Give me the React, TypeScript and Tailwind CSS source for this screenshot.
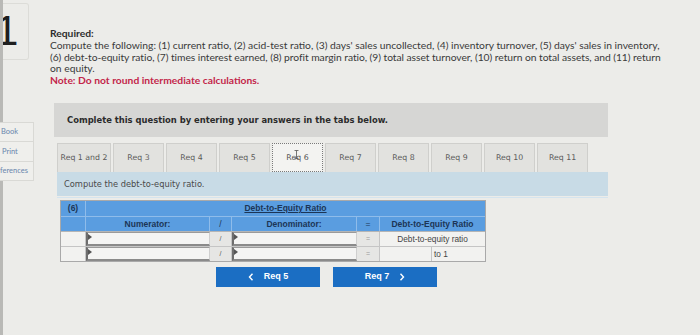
import React from "react";

const tabs = ["Req 1 and 2", "Req 3", "Req 4", "Req 5", "Req 6", "Req 7", "Req 8", "Req 9", "Req 10", "Req 11"];

function Chevron({ dir }: { dir: "left" | "right" }) {
  return (
    <svg width="6" height="8" viewBox="0 0 6 8" fill="none" stroke="white" strokeWidth="1.4">
      {dir === "left" ? <path d="M4.5 0.8 L1.5 4 L4.5 7.2" /> : <path d="M1.5 0.8 L4.5 4 L1.5 7.2" />}
    </svg>
  );
}

function InputCell({ w }: { w: string }) {
  return (
    <div className={`${w} h-full relative bg-[#f4f4f3] border-l-2 border-b-2 border-t border-r border-l-[#6d6d6d] border-b-[#8a8a8a] border-t-[#9a9a9a] border-r-[#cfcfcf]`}>
      <div className="absolute left-0 top-[1px] w-0 h-0 border-t-[3px] border-b-[3px] border-l-[4px] border-t-transparent border-b-transparent border-l-[#555]" />
    </div>
  );
}

export default function App() {
  return (
    <div className="w-[700px] h-[335px] overflow-hidden bg-[#ecece9] flex" style={{ fontFamily: "Lato, 'Liberation Sans', sans-serif" }}>
      {/* left column */}
      <div className="w-[34px] shrink-0 flex flex-col border-l-[3px] border-l-[#b9b9b6]">
        <div className="mt-[3px] w-[26px] h-[57px] border border-l-0 border-[#dcdcd8] rounded-r-[3px] overflow-hidden">
          <div className="ml-[-8px] mt-[2px] text-[42px] leading-[50px] text-[#1e1e1e] font-['Liberation_Sans']">1</div>
        </div>
        <div className="mt-[62px] flex flex-col w-[34px] -ml-[3px] text-[7.5px] text-[#6a86ac]">
          <div className="h-[20px] border border-l-0 border-[#d9d9d5] bg-[#efefec] flex items-center pl-[1px]">Book</div>
          <div className="h-[20px] border border-l-0 border-t-0 border-[#d9d9d5] bg-[#efefec] flex items-center pl-[2px]">Print</div>
          <div className="h-[19px] border border-l-0 border-t-0 border-[#d9d9d5] bg-[#efefec] flex items-center">ferences</div>
        </div>
      </div>

      {/* main column */}
      <div className="flex-1 pl-[16px] pt-[28px]">
        <div className="text-[10.3px] leading-[11.8px] text-[#3a3a3a] whitespace-nowrap">
          <div className="font-bold text-[#2e2e2e]">Required:</div>
          <div>Compute the following: (1) current ratio, (2) acid-test ratio, (3) days' sales uncollected, (4) inventory turnover, (5) days' sales in inventory,</div>
          <div className="tracking-[-0.05px]">(6) debt-to-equity ratio, (7) times interest earned, (8) profit margin ratio, (9) total asset turnover, (10) return on total assets, and (11) return</div>
          <div>on equity.</div>
          <div className="font-bold text-[#c3264a]">Note: Do not round intermediate calculations.</div>
        </div>

        <div className="ml-[4px] mt-[16px] w-[554px] h-[34px] bg-[#d6d6d4] flex items-center pl-[13px] text-[8.4px] font-bold text-[#2b2b2b]" style={{ fontFamily: "'DejaVu Sans', sans-serif" }}>
          Complete this question by entering your answers in the tabs below.
        </div>

        <div className="ml-[7px] mt-[6px] flex gap-[2px] h-[29px]" style={{ fontFamily: "'DejaVu Sans', sans-serif" }}>
          {tabs.map((t, i) => (
            <div
              key={t}
              className={`${i === 0 ? "w-[54px]" : "w-[51px]"} h-full flex items-center justify-center text-[7.8px] relative ${
                i === 4
                  ? "bg-[#f3f3f1] border border-dotted border-[#7a7a7a] text-[#555]"
                  : "bg-[#e2e2df] border border-[#cfcfcc] border-b-0 text-[#5a5a5a]"
              }`}
            >
              {t}
              {i === 4 && (
                <svg className="absolute left-[21px] top-[6px]" width="5" height="9" viewBox="0 0 5 9" fill="none" stroke="#555" strokeWidth="0.8">
                  <path d="M0.5 0.5 H4.5 M2.5 0.5 V8.5 M0.5 8.5 H4.5" />
                </svg>
              )}
            </div>
          ))}
        </div>

        <div className="ml-[7px] w-[551px] h-[24px] bg-[#c8dbe6] flex items-center pl-[7px] text-[8.3px] text-[#4a4a4a]" style={{ fontFamily: "'DejaVu Sans', sans-serif" }}>
          Compute the debt-to-equity ratio.
        </div>
        <div className="ml-[7px] w-[551px] h-[1px] mt-[1px] bg-[#d5e4ee]" />

        {/* table */}
        <div className="ml-[10px] mt-[2px] w-[426px] border border-[#a9a9a9] font-bold text-[8.5px]" style={{ fontFamily: "'Liberation Sans', Arial, sans-serif" }}>
          <div className="flex h-[15px] bg-[#5a9de0] text-[#1c3556]">
            <div className="w-[25px] flex items-center justify-center border-r border-[#8fbcea]">(6)</div>
            <div className="flex-1 flex items-center justify-center underline">Debt-to-Equity Ratio</div>
          </div>
          <div className="flex h-[15px] bg-[#5a9de0] text-[#1c3556] border-t border-[#8fbcea]">
            <div className="w-[25px] border-r border-[#8fbcea]" />
            <div className="w-[124px] flex items-center justify-center border-r border-[#8fbcea]">Numerator:</div>
            <div className="w-[22px] flex items-center justify-center border-r border-[#8fbcea] font-normal">/</div>
            <div className="w-[125px] flex items-center justify-center border-r border-[#8fbcea]">Denominator:</div>
            <div className="w-[23px] flex items-center justify-center border-r border-[#8fbcea] font-normal">=</div>
            <div className="flex-1 flex items-center justify-center">Debt-to-Equity Ratio</div>
          </div>
          <div className="flex h-[15px] bg-[#f2f2f0] border-t border-[#b5b5b5] font-normal text-[#555]">
            <div className="w-[25px] border-r border-[#c5c5c5]" />
            <InputCell w="w-[124px]" />
            <div className="w-[22px] flex items-center justify-center border-r border-[#c5c5c5] bg-[#e6e6e4] text-[7px]">/</div>
            <InputCell w="w-[125px]" />
            <div className="w-[23px] flex items-center justify-center border-r border-[#c5c5c5] bg-[#e6e6e4] text-[7px] text-[#999]">=</div>
            <div className="flex-1 flex items-center justify-center text-[8.3px] text-[#444]">Debt-to-equity ratio</div>
          </div>
          <div className="flex h-[15px] bg-[#f2f2f0] border-t border-[#c5c5c5] font-normal text-[#555]">
            <div className="w-[25px] border-r border-[#c5c5c5]" />
            <InputCell w="w-[124px]" />
            <div className="w-[22px] flex items-center justify-center border-r border-[#c5c5c5] bg-[#e6e6e4] text-[7px]">/</div>
            <InputCell w="w-[125px]" />
            <div className="w-[23px] flex items-center justify-center border-r border-[#c5c5c5] bg-[#e6e6e4] text-[7px] text-[#999]">=</div>
            <div className="w-[52px] border-r border-[#c5c5c5]" />
            <div className="flex-1 flex items-center pl-[2px] text-[8.3px] text-[#444]">to 1</div>
          </div>
        </div>

        {/* buttons */}
        <div className="ml-[166px] mt-[5px] flex gap-[13px] font-bold text-[9px] text-white" style={{ fontFamily: "'Liberation Sans', Arial, sans-serif" }}>
          <div className="w-[104px] h-[20px] bg-[#1b6ec3] flex items-center justify-center gap-[10px]">
            <Chevron dir="left" />
            <span>Req 5</span>
          </div>
          <div className="w-[104px] h-[20px] bg-[#1b6ec3] flex items-center justify-center gap-[10px]">
            <span>Req 7</span>
            <Chevron dir="right" />
          </div>
        </div>
      </div>
    </div>
  );
}
